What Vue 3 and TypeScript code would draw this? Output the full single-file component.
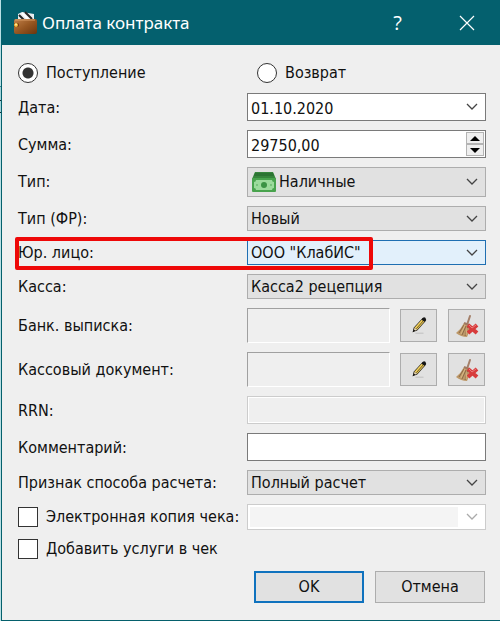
<script setup lang="ts">
import { ref } from 'vue'

const operation = ref('in')
const date = ref('01.10.2020')
const sum = ref('29750,00')
const comment = ref('')
const emailCopy = ref(false)
const addServices = ref(false)

function step(delta: number) {
  const value = parseFloat(sum.value.replace(',', '.')) || 0
  sum.value = (value + delta).toFixed(2).replace('.', ',')
}

const documents = [
  { id: 'bank', label: 'Банк. выписка:' },
  { id: 'cash', label: 'Кассовый документ:' },
]
</script>

<template>
  <main class="screen">
    <div class="backdrop"></div>
    <section class="dialog">
      <header class="titlebar">
        <svg class="wallet" viewBox="0 0 24 24" aria-hidden="true">
          <defs>
            <linearGradient id="leather" x1="0" y1="0" x2="1" y2="1">
              <stop offset="0" stop-color="#c08049" />
              <stop offset="0.5" stop-color="#975722" />
              <stop offset="1" stop-color="#6a350e" />
            </linearGradient>
          </defs>
          <path d="M5 9V3L9 1 21 3V10H5Z" fill="#e9eef0" />
          <path d="M6 4 11 9M12 1 19 8" stroke="#272727" stroke-width="2" />
          <path d="M9 2 15 8" stroke="#fff" stroke-width="2" />
          <path d="M3 8H22Q24 8 24 10V21Q24 23 22 23H3Q1 23 1 21V10Q1 8 3 8Z" fill="url(#leather)" />
          <path d="M2 9H22" stroke="#d79c66" />
          <path d="M1 12H5Q7 14 5 16H1Z" fill="#6d350e" />
          <circle cx="3" cy="14" r="2" fill="#f3b83b" />
          <circle cx="3" cy="13.500" r="1" fill="#ffe9a0" />
        </svg>
        <h1>Оплата контракта</h1>
        <button class="caption" type="button" aria-label="Справка">?</button>
        <button class="caption" type="button" aria-label="Закрыть">
          <svg viewBox="0 0 16 16" width="16" height="16"><path d="M1 1 15 15M15 1 1 15" stroke="#fff" stroke-width="1.2" /></svg>
        </button>
      </header>

      <form class="form" @submit.prevent>
        <div class="row radios">
          <label class="option"><input v-model="operation" type="radio" name="operation" value="in" />Поступление</label>
          <label class="option second"><input v-model="operation" type="radio" name="operation" value="back" />Возврат</label>
        </div>

        <div class="row h28">
          <label for="date">Дата:</label>
          <div class="box">
            <input id="date" v-model="date" type="text" />
            <svg class="chevron" viewBox="0 0 12 8"><path d="M1 1 6 6 11 1" /></svg>
          </div>
        </div>

        <div class="row h28">
          <label for="sum">Сумма:</label>
          <div class="box">
            <input id="sum" v-model="sum" type="text" />
            <div class="spin">
              <button type="button" aria-label="Увеличить" @click="step(1)"><svg viewBox="0 0 10 5"><path d="M0 5 5 0 10 5Z" /></svg></button>
              <button type="button" aria-label="Уменьшить" @click="step(-1)"><svg viewBox="0 0 10 5"><path d="M0 0 5 5 10 0Z" /></svg></button>
            </div>
          </div>
        </div>

        <div class="row h30">
          <label for="type">Тип:</label>
          <div class="box combo">
            <svg class="money" viewBox="0 0 24 20" aria-hidden="true">
              <path d="M3 0H21L24 7V17H0V7Z" fill="#36853c" />
              <path d="M3 1H21L22 4H2Z" fill="#2c7433" />
              <rect x="0" y="6" width="24" height="14" rx="1" fill="#48a34d" />
              <path d="M4 8H20Q20 10 22 10V16Q20 16 20 18H4Q4 16 2 16V10Q4 10 4 8Z" fill="#9cdb9c" />
              <circle cx="12" cy="13" r="3" fill="#3b9344" />
              <circle cx="5" cy="13" r="1" fill="#6cbd70" />
              <circle cx="19" cy="13" r="1" fill="#6cbd70" />
            </svg>
            <select id="type" class="with-icon"><option>Наличные</option></select>
            <svg class="chevron" viewBox="0 0 12 8"><path d="M1 1 6 6 11 1" /></svg>
          </div>
        </div>

        <div class="row h25">
          <label for="type-fr">Тип (ФР):</label>
          <div class="box combo">
            <select id="type-fr"><option>Новый</option></select>
            <svg class="chevron" viewBox="0 0 12 8"><path d="M1 1 6 6 11 1" /></svg>
          </div>
        </div>

        <div class="row h25 marked">
          <label for="legal">Юр. лицо:</label>
          <div class="box combo active">
            <select id="legal"><option>ООО "КлабИС"</option></select>
            <svg class="chevron" viewBox="0 0 12 8"><path d="M1 1 6 6 11 1" /></svg>
          </div>
        </div>

        <div class="row h25">
          <label for="desk">Касса:</label>
          <div class="box combo">
            <select id="desk"><option>Касса2 рецепция</option></select>
            <svg class="chevron" viewBox="0 0 12 8"><path d="M1 1 6 6 11 1" /></svg>
          </div>
        </div>

        <div v-for="doc in documents" :key="doc.id" class="row h35">
          <label :for="doc.id">{{ doc.label }}</label>
          <div class="document">
            <input :id="doc.id" class="sunken" type="text" readonly />
            <button class="tool" type="button" aria-label="Изменить">
              <svg viewBox="0 0 20 20">
                <path d="M6 18H15" stroke="#bcbcbc" />
                <path d="M3 17 4 12 14 1 18 4 8 15Z" fill="#26231a" />
                <path d="M5 12 13 3 16 5 8 14Z" fill="#f5d25c" />
                <path d="M7 13 15 4" stroke="#57471a" />
                <path d="M4 16 5 12 8 14Z" fill="#e8d5ac" />
                <path d="M3 17 4 14 6 15Z" fill="#111" />
                <path d="M13 3 14 1Q17 -1 18 3L16 5Z" fill="#151515" />
              </svg>
            </button>
            <button class="tool" type="button" aria-label="Очистить">
              <svg viewBox="0 0 24 24">
                <path d="M15 2 12 11" stroke="#a4806a" stroke-width="2" stroke-linecap="round" />
                <path d="M9 9 14 11 15 16 12 23Q6 23 1 19Q6 15 9 9Z" fill="#bd9868" />
                <path d="M9 11 4 19M11 12 7 21M13 12 10 22" stroke="#8b6947" />
                <path d="M10 11 6 20M12 14 11 21" stroke="#d9b783" />
                <path d="M9 9 14 11" stroke="#a07a62" stroke-width="2" />
                <path d="M13 11 22 19M22 11 13 19" stroke="#d73b3b" stroke-width="4" />
                <path d="M14 11 17 14 21 11" stroke="#ea7b7b" fill="none" />
              </svg>
            </button>
          </div>
        </div>

        <div class="row h28">
          <label for="rrn">RRN:</label>
          <div class="box disabled"><input id="rrn" type="text" disabled /></div>
        </div>

        <div class="row h28">
          <label for="comment">Комментарий:</label>
          <div class="box"><input id="comment" v-model="comment" type="text" /></div>
        </div>

        <div class="row h25">
          <label for="method">Признак способа расчета:</label>
          <div class="box combo">
            <select id="method"><option>Полный расчет</option></select>
            <svg class="chevron" viewBox="0 0 12 8"><path d="M1 1 6 6 11 1" /></svg>
          </div>
        </div>

        <div class="row h25">
          <label class="option"><input v-model="emailCopy" type="checkbox" />Электронная копия чека:</label>
          <div class="box disabled-combo">
            <select aria-label="Адрес для копии чека" disabled></select>
            <svg class="chevron" viewBox="0 0 12 8"><path d="M1 1 6 6 11 1" /></svg>
          </div>
        </div>

        <label class="option services"><input v-model="addServices" type="checkbox" />Добавить услуги в чек</label>

        <footer class="actions">
          <button class="push default" type="submit">OK</button>
          <button class="push" type="button">Отмена</button>
        </footer>
      </form>
    </section>
  </main>
</template>

<style>
body {
  background: #efefef;
}
</style>

<style scoped>
* {
  box-sizing: border-box;
}
.screen {
  display: flex;
  min-height: 100vh;
  font: 16px/20px "DejaVu Sans Condensed", "DejaVu Sans", sans-serif;
  font-stretch: condensed;
  color: #111;
}
.backdrop {
  width: 1px;
  background: linear-gradient(
    #b9dfe4 86px, #3d8690 86px 87px, #a3d3da 87px 100px,
    #102c33 100px 101px, #a3d3da 101px 112px, #102c33 112px 113px, #b9dfe4 113px
  );
}
.dialog {
  flex: 1;
  display: flex;
  flex-direction: column;
  border-left: 1px solid #04606c;
  border-bottom: 1px solid #04606c;
  background: #efefef;
}
.titlebar {
  display: flex;
  align-items: center;
  height: 45px;
  padding-left: 11px;
  background: #04606e;
  color: #fff;
}
.wallet {
  width: 24px;
  height: 24px;
}
h1 {
  flex: 1;
  margin: 0 0 0 5px;
  font: 400 17px/24px "Noto Sans", sans-serif;
}
.caption {
  display: flex;
  align-items: center;
  justify-content: center;
  width: 70px;
  height: 45px;
  padding: 0 3px 0 0;
  border: 0;
  background: none;
  color: #fff;
  font: 20px/24px "Open Sans", sans-serif;
}
.caption:last-child {
  width: 66px;
  padding: 0;
}
.form {
  display: flex;
  flex-direction: column;
  gap: 9px;
  padding: 16px 14px 16px 16px;
}
.row {
  display: grid;
  grid-template-columns: 229px minmax(0, 1fr);
  align-items: center;
}
.radios {
  height: 23px;
}
.h25 {
  height: 25px;
}
.h28 {
  height: 28px;
}
.h30 {
  height: 30px;
}
.h35 {
  height: 35px;
}
.row > label {
  white-space: nowrap;
}
.option {
  display: flex;
  align-items: center;
  gap: 8px;
}
.second {
  padding-left: 10px;
}
.option input {
  appearance: none;
  flex: none;
  width: 20px;
  height: 20px;
  margin: 0;
  border: 1px solid #333;
  background: #fff;
}
.option input[type="radio"] {
  border-radius: 50%;
}
.option input[type="radio"]:checked {
  background: radial-gradient(circle, #333 0 5px, #fff 6px);
}
.option input[type="checkbox"]:checked {
  background: #333;
  box-shadow: inset 0 0 0 4px #fff;
}
.services {
  height: 22px;
}
.box {
  display: grid;
  grid-template-columns: minmax(0, 1fr) auto;
  align-items: center;
  height: 100%;
  border: 1px solid #7a7a7a;
  background: #fff;
}
.box > * {
  grid-row: 1;
}
input[type="text"],
select {
  min-width: 0;
  width: 100%;
  height: 100%;
  margin: 0;
  padding: 0 3px;
  border: 0;
  border-radius: 0;
  outline: 0;
  background: none;
  color: inherit;
  font: inherit;
}
.h28 > label,
.h28 input[type="text"] {
  padding-top: 2px;
}
select {
  appearance: none;
  grid-column: 1 / 3;
}
.combo {
  border-color: #adadad;
  background: #e1e1e1;
}
.active {
  border-color: #1f6fb2;
  background: #e2f0fb;
}
.chevron {
  grid-column: 2;
  width: 12px;
  height: 8px;
  margin-right: 7px;
  pointer-events: none;
}
.chevron path {
  fill: none;
  stroke: #444;
  stroke-width: 1.3;
}
.money {
  grid-column: 1;
  width: 24px;
  height: 20px;
  margin-left: 4px;
}
.with-icon {
  padding-left: 31px;
}
.spin {
  display: flex;
  flex-direction: column;
  width: 18px;
  height: 24px;
  margin-right: 1px;
}
.spin button {
  display: flex;
  align-items: center;
  justify-content: center;
  flex: 1;
  padding: 0;
  border: 1px solid #b4b4b4;
  background: #efefef;
}
.spin svg {
  width: 10px;
  height: 5px;
}
.marked {
  position: relative;
}
.marked::after {
  content: "";
  position: absolute;
  inset: -3px 113px -5px -3px;
  border: 4px solid #ee0808;
  border-radius: 2px;
  pointer-events: none;
}
.document {
  display: flex;
  align-items: center;
  gap: 11px;
  height: 100%;
  padding-right: 1px;
}
.document .sunken {
  flex: 1;
  margin-right: -1px;
  border: 1px solid;
  border-color: #a0a0a0 #fff #fff #a0a0a0;
}
.tool {
  display: flex;
  align-items: center;
  justify-content: center;
  width: 37px;
  height: 33px;
  padding: 0;
  border: 1px solid #adadad;
  background: #e1e1e1;
}
.tool svg {
  width: 24px;
  height: 24px;
  fill: none;
}
.tool:nth-child(2) svg {
  width: 18px;
  height: 18px;
}
.disabled {
  padding: 1px;
  border-color: #ccc;
}
.disabled input {
  grid-column: 1 / 3;
  background: #efefef;
}
.disabled-combo {
  padding: 2px;
  border-color: #ccc;
}
.disabled-combo select {
  grid-column: 1;
  background: #efefef;
}
.disabled-combo .chevron {
  margin: 0 5px 0 8px;
}
.disabled-combo path {
  stroke: #aaa;
}
.actions {
  display: flex;
  justify-content: flex-end;
  gap: 11px;
  padding: 2px 1px 0 0;
}
.push {
  width: 110px;
  height: 32px;
  padding: 0;
  border: 1px solid #adadad;
  background: #e1e1e1;
  color: inherit;
  font: inherit;
}
.default {
  border: 2px solid #0f72be;
}
</style>
